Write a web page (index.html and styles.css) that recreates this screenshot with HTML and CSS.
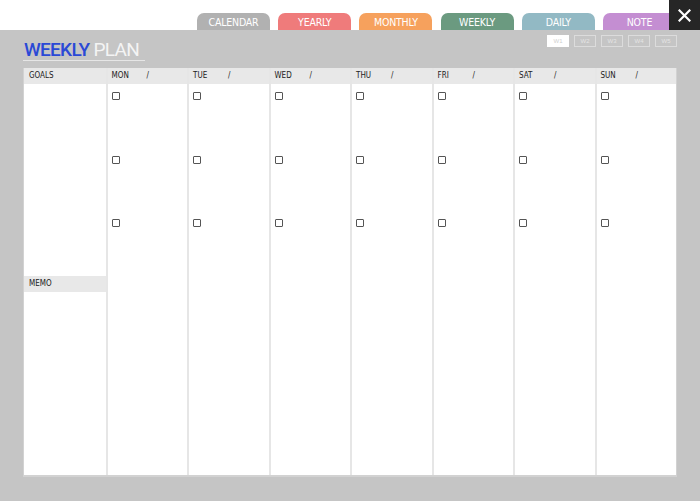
FILE: index.html
```html
<!DOCTYPE html>
<html>
<head>
<meta charset="utf-8">
<link rel="stylesheet" href="styles.css">
</head>
<body>
<div class="app">
  <div class="topbar">
    <div class="tab t-cal">CALENDAR</div>
    <div class="tab t-year">YEARLY</div>
    <div class="tab t-month">MONTHLY</div>
    <div class="tab t-week">WEEKLY</div>
    <div class="tab t-day">DAILY</div>
    <div class="tab t-note">NOTE</div>
    <div class="close">
      <svg width="13" height="13" viewBox="0 0 13 13"><path d="M1.5 1.5 L11.5 11.5 M11.5 1.5 L1.5 11.5" stroke="#fff" stroke-width="2.2" stroke-linecap="square"/></svg>
    </div>
  </div>
  <div class="main">
    <div class="titlerow">
      <div class="title"><span class="blue">WEEKLY</span><span class="white">PLAN</span></div>
      <div class="weeks">
        <span class="wk active">W1</span>
        <span class="wk">W2</span>
        <span class="wk">W3</span>
        <span class="wk">W4</span>
        <span class="wk">W5</span>
      </div>
    </div>
    <div class="table">
      <div class="col goals">
        <div class="head">GOALS</div>
        <div class="goalbody"></div>
        <div class="head memo">MEMO</div>
        <div class="rest"></div>
      </div>
      <div class="col">
        <div class="head"><span class="day">MON</span><span>/</span></div>
        <div class="body"><i class="cb"></i><i class="cb"></i><i class="cb"></i></div>
      </div>
      <div class="col">
        <div class="head"><span class="day">TUE</span><span>/</span></div>
        <div class="body"><i class="cb"></i><i class="cb"></i><i class="cb"></i></div>
      </div>
      <div class="col">
        <div class="head"><span class="day">WED</span><span>/</span></div>
        <div class="body"><i class="cb"></i><i class="cb"></i><i class="cb"></i></div>
      </div>
      <div class="col">
        <div class="head"><span class="day">THU</span><span>/</span></div>
        <div class="body"><i class="cb"></i><i class="cb"></i><i class="cb"></i></div>
      </div>
      <div class="col">
        <div class="head"><span class="day">FRI</span><span>/</span></div>
        <div class="body"><i class="cb"></i><i class="cb"></i><i class="cb"></i></div>
      </div>
      <div class="col">
        <div class="head"><span class="day">SAT</span><span>/</span></div>
        <div class="body"><i class="cb"></i><i class="cb"></i><i class="cb"></i></div>
      </div>
      <div class="col">
        <div class="head"><span class="day">SUN</span><span>/</span></div>
        <div class="body"><i class="cb"></i><i class="cb"></i><i class="cb"></i></div>
      </div>
    </div>
  </div>
</div>
</body>
</html>
```
FILE: styles.css
```css
* { box-sizing: border-box; }
html, body { margin: 0; padding: 0; }
body {
  width: 700px;
  height: 501px;
  overflow: hidden;
  font-family: "DejaVu Sans Condensed", "Roboto", "Liberation Sans", sans-serif;
  background: #fff;
}
.app { width: 700px; height: 501px; display: flex; flex-direction: column; position: relative; }
.topbar {
  height: 30px;
  background: #fff;
  display: flex;
  align-items: flex-end;
  padding-left: 197px;
  gap: 8.2px;
}
.tab {
  width: 73px;
  height: 17px;
  border-radius: 7px 7px 0 0;
  color: #fff;
  font-size: 10.5px;
  line-height: 18px;
  text-align: center;
  letter-spacing: -0.2px;
}
.t-cal { background: #b1b1b1; }
.t-year { background: #ef7b7b; }
.t-month { background: #f6a15d; }
.t-week { background: #6b9a80; }
.t-day { background: #92b9c4; }
.t-note { background: #c48ed2; }
.close {
  position: absolute;
  right: 0;
  top: 0;
  width: 31px;
  height: 30px;
  background: #262626;
  display: flex;
  align-items: center;
  justify-content: center;
}
.main {
  flex: 1;
  background: #c5c5c5;
  padding: 0 23px 24px 23px;
  display: flex;
  flex-direction: column;
}
.titlerow {
  height: 38px;
  display: flex;
  justify-content: space-between;
  align-items: flex-start;
}
.title {
  margin-top: 9px;
  width: 122px;
  border-bottom: 1px solid #e6e6e6;
  font-family: "Roboto", "Liberation Sans", sans-serif;
  font-weight: 500;
  font-size: 19px;
  line-height: 21px;
  padding-left: 1px;
  letter-spacing: -0.7px;
  white-space: nowrap;
}
.blue { color: #2a49d6; margin-right: 4px; }
.white { color: #f4f4f4; font-weight: 400; }
.weeks { display: flex; gap: 5px; margin-top: 5px; }
.wk {
  width: 22px;
  height: 12px;
  border: 1px solid #dcdcdc;
  color: #e4e4e4;
  font-size: 6px;
  line-height: 10px;
  text-align: center;
  font-family: "Liberation Sans", sans-serif;
}
.wk.active { background: #fff; border-color: #fff; color: #d0d0d0; }
.table {
  flex: 1;
  background: #fff;
  display: grid;
  grid-template-columns: repeat(8, 1fr);
  border-left: 1px solid #d2d2d2;
  border-right: 1px solid #d2d2d2;
  border-bottom: 2px solid #d2d2d2;
}
.col { display: flex; flex-direction: column; border-left: 2px solid #e6e6e6; }
.col.goals { border-left: none; }
.head {
  height: 16px;
  background: #e8e8e8;
  font-size: 8px;
  line-height: 16px;
  color: #222;
  padding-left: 4px;
  display: flex;
}
.goals .head { padding-left: 5px; }
.day { width: 35px; }
.goalbody { height: 192px; }
.rest { flex: 1; }
.body { display: flex; flex-direction: column; padding: 8px 0 0 4px; gap: 55.5px; }
.cb {
  display: block;
  width: 8px;
  height: 8px;
  border: 1px solid #555;
  border-radius: 1px;
}
```
